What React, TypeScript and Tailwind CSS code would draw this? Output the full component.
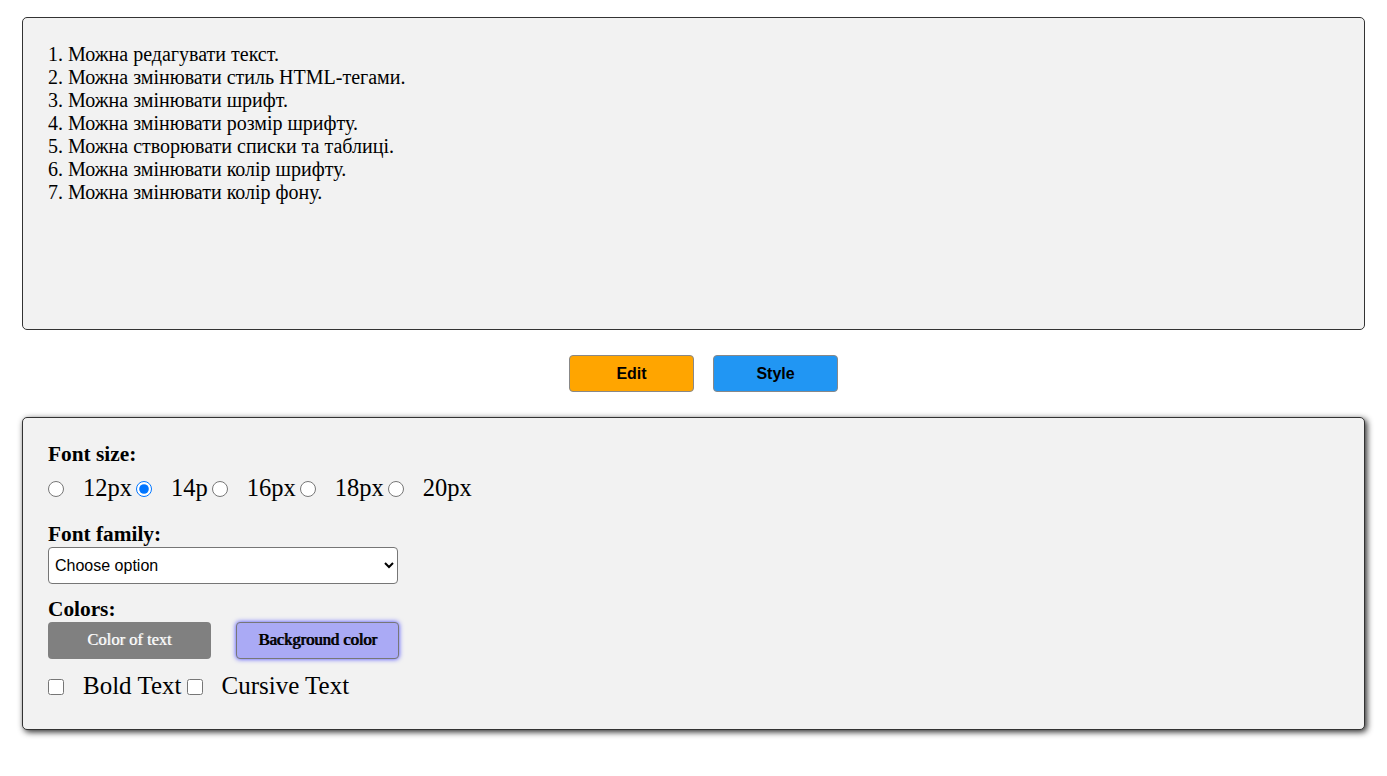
const items = [
    "1. Можна редагувати текст.",
    "2. Можна змінювати стиль HTML-тегами.",
    "3. Можна змінювати шрифт.",
    "4. Можна змінювати розмір шрифту.",
    "5. Можна створювати списки та таблиці.",
    "6. Можна змінювати колір шрифту.",
    "7. Можна змінювати колір фону.",
];

const sizes = ["12px", "14p", "16px", "18px", "20px"];

const App = () => {
    return (
        <div className="bg-white min-h-screen px-[22px] pt-[17px] pb-[40px] text-black font-['Liberation_Serif','Times_New_Roman',serif]">
            <div className="h-[313px] border border-[#333] rounded-[5px] bg-[#f2f2f2] px-[25px] pt-[25px] text-[20px] leading-[23px]">
                {items.map((item) => (
                    <div key={item}>{item}</div>
                ))}
            </div>

            <div className="flex justify-center gap-[19px] pl-[20px] mt-[25px]">
                <button
                    type="button"
                    className="w-[125px] h-[37px] bg-[#ffa500] border border-[#888] rounded-[4px] font-['Liberation_Sans',Arial,sans-serif] font-bold text-[16px]"
                >
                    Edit
                </button>
                <button
                    type="button"
                    className="w-[125px] h-[37px] bg-[#2196f3] border border-[#888] rounded-[4px] font-['Liberation_Sans',Arial,sans-serif] font-bold text-[16px]"
                >
                    Style
                </button>
            </div>

            <div className="mt-[25px] h-[313px] border border-[#333] rounded-[5px] bg-[#f2f2f2] px-[25px] pt-[25px] shadow-[2px_2px_6px_rgba(0,0,0,0.85)]">
                <div className="font-bold text-[21.33px] leading-[23px]">Font size:</div>
                <div className="flex items-center mt-[8px] h-[28px] text-[24.5px] leading-[28px]">
                    {sizes.map((s, i) => (
                        <div key={s} className="flex items-center">
                            <input
                                type="radio"
                                name="size"
                                defaultChecked={i === 1}
                                className={`w-[16px] h-[16px] m-0 mt-[2px] ${i === 0 ? "" : "ml-[4px]"}`}
                            />
                            <span className="ml-[19px]">{s}</span>
                        </div>
                    ))}
                </div>

                <div className="font-bold text-[21.33px] leading-[23px] mt-[21px]">Font family:</div>
                <select className="mt-[1px] w-[350px] h-[37px] bg-white border border-[#767676] rounded-[4px] px-[2px] text-[16px] font-['Liberation_Sans',Arial,sans-serif]">
                    <option>Choose option</option>
                    <option>Arial</option>
                    <option>Times New Roman</option>
                    <option>Verdana</option>
                </select>

                <div className="font-bold text-[21.33px] leading-[23px] mt-[14px]">Colors:</div>
                <div className="flex gap-[25px] mt-[1px]">
                    <button
                        type="button"
                        className="w-[163px] h-[37px] bg-[#808080] rounded-[4px] text-white text-[16.5px] [text-shadow:1px_0_0_#bdbdbd]"
                    >
                        Color of text
                    </button>
                    <button
                        type="button"
                        className="w-[163px] h-[37px] bg-[#aaaaf5] border border-[#777] rounded-[4px] text-[16.5px] [text-shadow:1px_0_0_#000] shadow-[0_0_5px_#4444ff]"
                    >
                        Background color
                    </button>
                </div>

                <div className="flex items-center mt-[13px] h-[28px] text-[25px] leading-[28px]">
                    <input type="checkbox" className="w-[16px] h-[16px] m-0 mt-[2px]" />
                    <span className="ml-[19px]">Bold Text</span>
                    <input type="checkbox" className="w-[16px] h-[16px] m-0 mt-[2px] ml-[5px]" />
                    <span className="ml-[19px]">Cursive Text</span>
                </div>
            </div>
        </div>
    );
};

export default App;
